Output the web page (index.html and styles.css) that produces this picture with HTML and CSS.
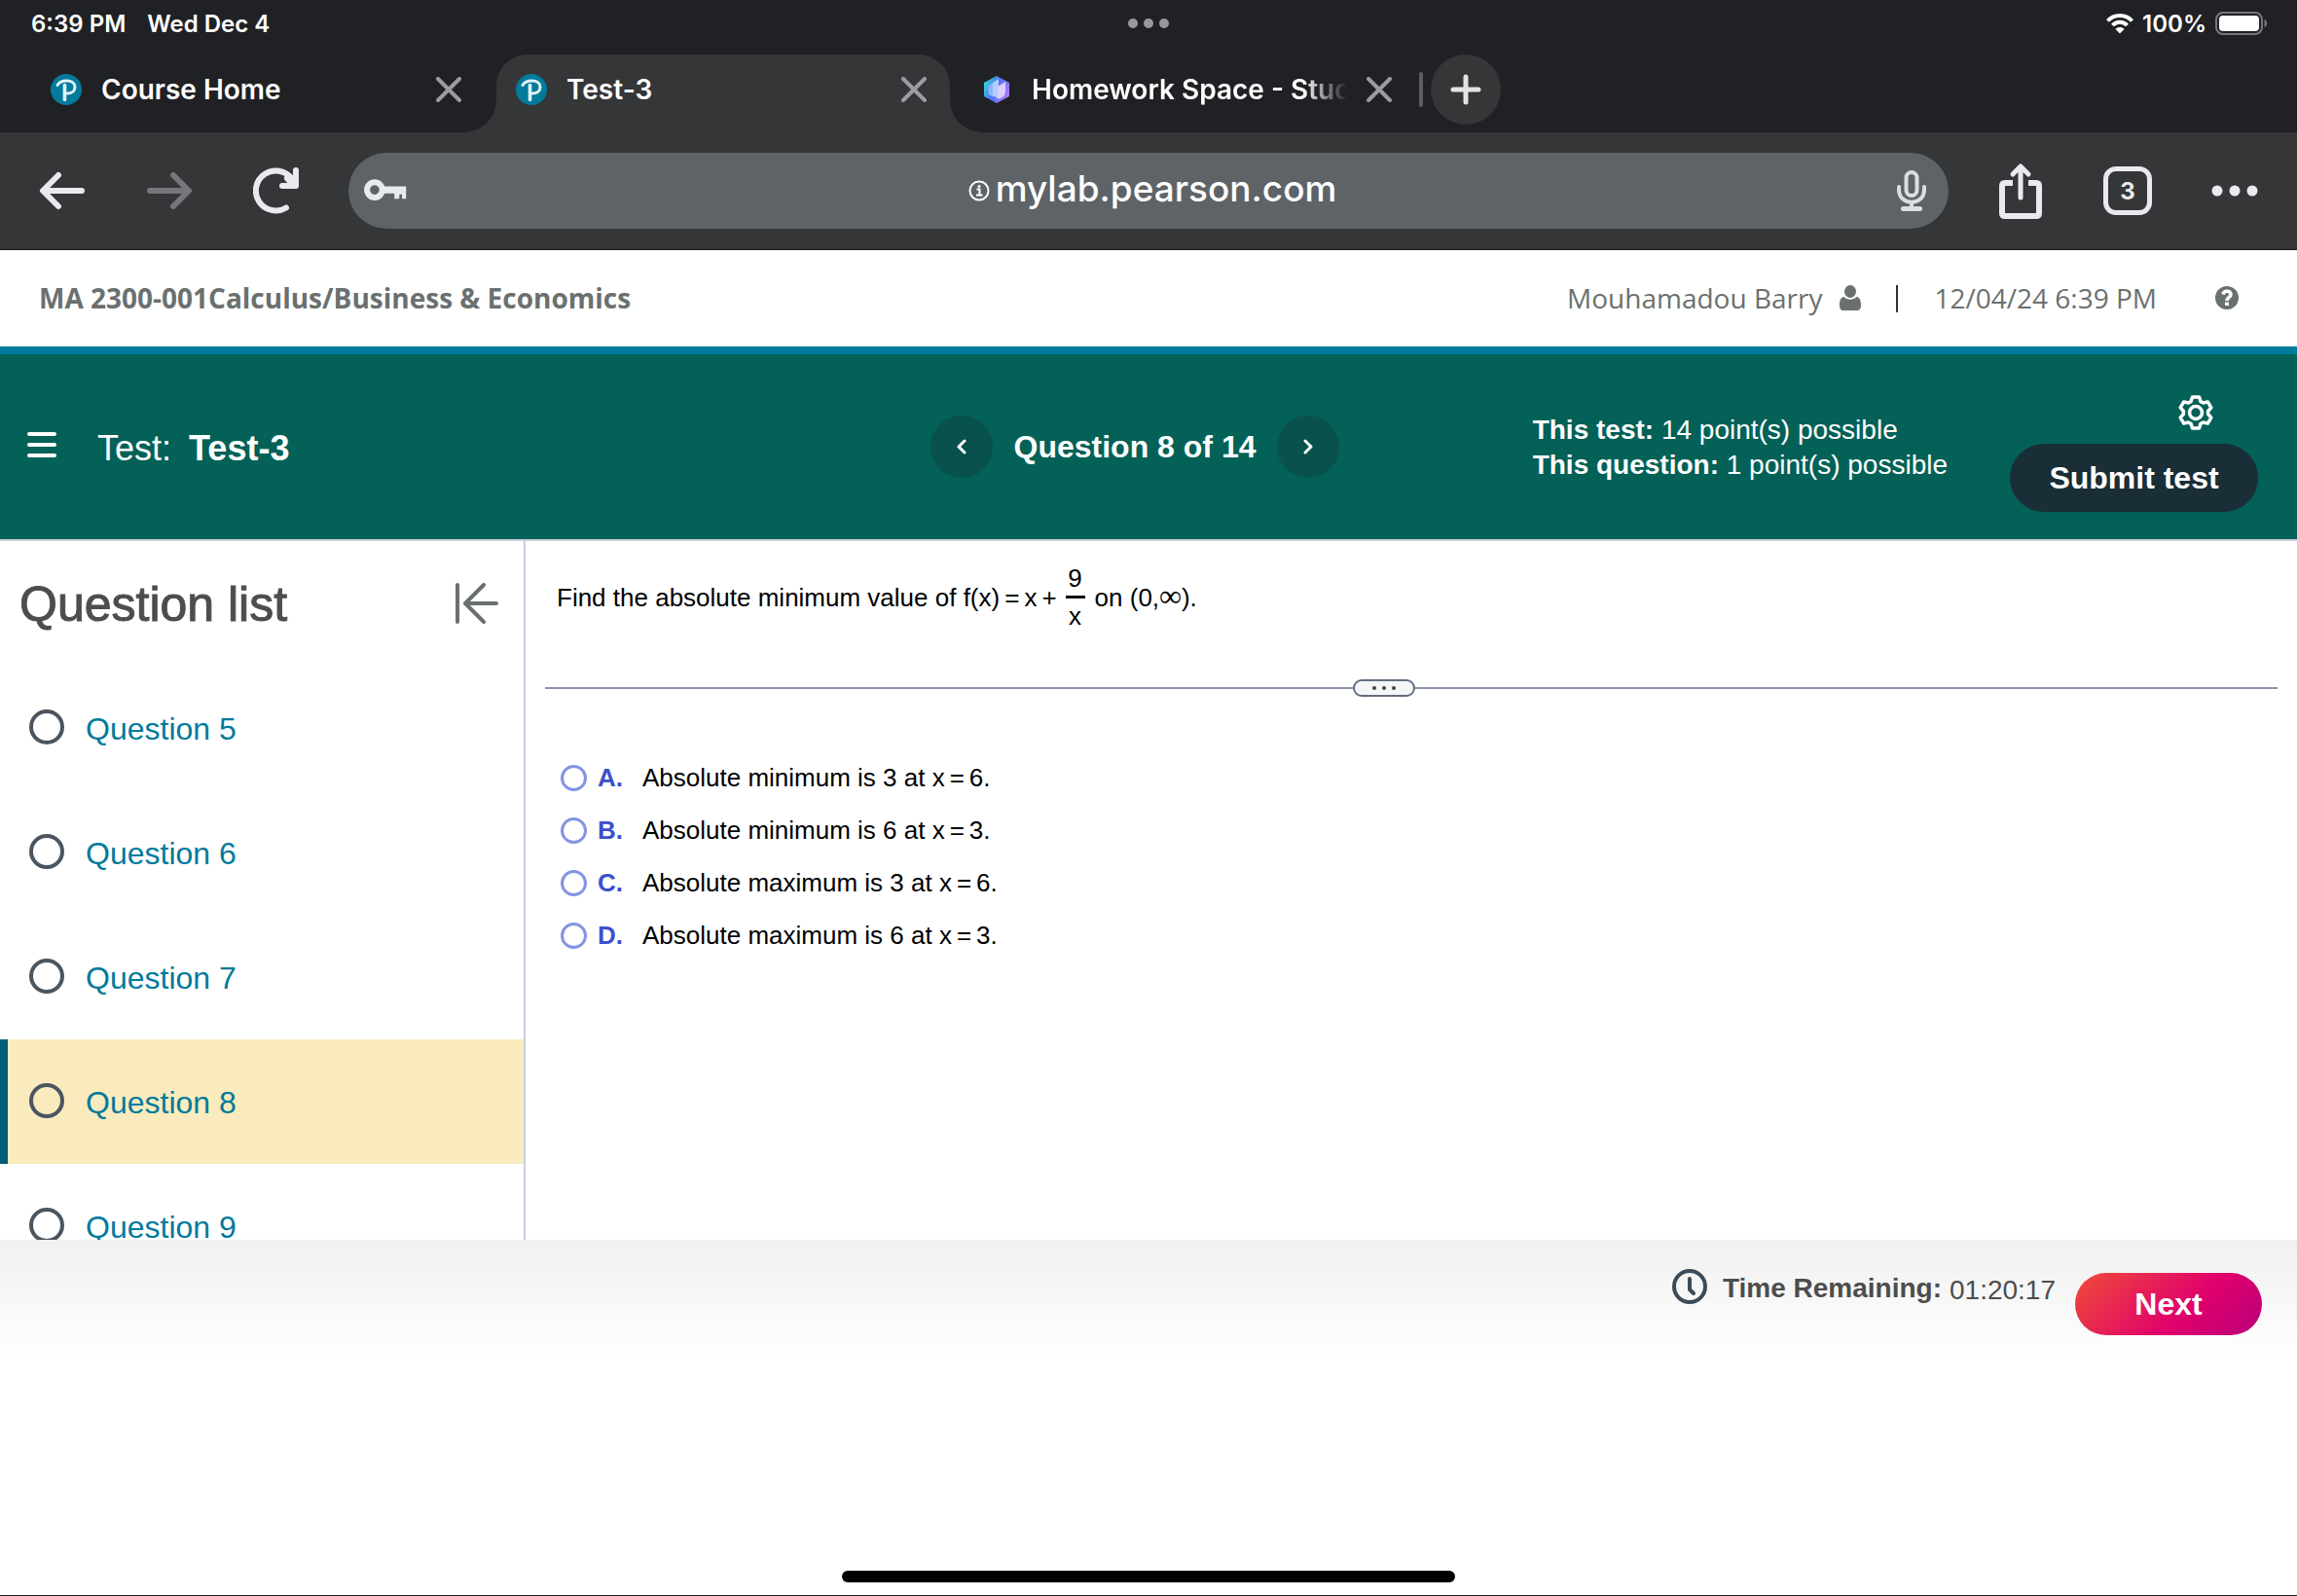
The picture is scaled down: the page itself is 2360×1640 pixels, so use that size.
FILE: index.html
```html
<!DOCTYPE html>
<html lang="en">
<head>
<meta charset="utf-8">
<title>Test-3</title>
<meta name="viewport" content="width=device-width, initial-scale=1">
<link rel="stylesheet" href="styles.css">
</head>
<body>
<svg width="0" height="0" class="defs" aria-hidden="true">
  <defs>
    <linearGradient id="gem" x1="0" y1="0.2" x2="1" y2="0.7">
      <stop offset="0" stop-color="#2fe0d0"/><stop offset="0.45" stop-color="#4a74f8"/><stop offset="1" stop-color="#b07cf8"/>
    </linearGradient>
    <symbol id="pearson" viewBox="0 0 32 32">
      <circle cx="16" cy="16" r="16" fill="#047a9c"/>
      <path d="M7 11.500C9 8 12 7 16.500 7c5 0 8.500 2.500 8.500 6.500s-3.500 6.500-8 6.500" fill="none" stroke="#dff3f8" stroke-width="3" stroke-linecap="round"/>
      <path d="M14.500 11.500v15" stroke="#dff3f8" stroke-width="3.600" stroke-linecap="round"/>
    </symbol>
    <symbol id="cross" viewBox="0 0 26 26">
      <path d="M2 2l22 22M24 2L2 24" stroke="#9b9ba1" stroke-width="4" stroke-linecap="round"/>
    </symbol>
  </defs>
</svg>

<header class="browser">
  <div class="status">
    <span class="clock">6:39 PM</span>
    <span class="date">Wed Dec 4</span>
    <span class="grab"><i></i><i></i><i></i></span>
    <span class="power">
      <svg width="28" height="22" viewBox="0 0 28 22" fill="none" stroke="#fff" stroke-width="4"><path d="M1.500 8.500C8 1 20 1 26.500 8.500M6.500 13c4-4.500 11-4.500 15 0"/><path d="M14 21.500l-4.500-4.500c2.500-2.600 6.500-2.600 9 0z" fill="#fff" stroke="none"/></svg>
      <span>100%</span>
      <svg width="54" height="24" viewBox="0 0 54 24"><rect x="1" y="1" width="47" height="22" rx="7" fill="none" stroke="#77777b" stroke-width="2"/><rect x="4" y="4" width="41" height="16" rx="4" fill="#fff"/><path d="M50.500 8c3.500 1 3.500 7 0 8z" fill="#77777b"/></svg>
    </span>
  </div>

  <nav class="tabs" aria-label="Open tabs">
    <div class="tab tab-first">
      <svg class="favicon"><use href="#pearson"/></svg>
      <span class="tab-title">Course Home</span>
      <button class="bare" aria-label="Close tab"><svg width="26" height="26"><use href="#cross"/></svg></button>
    </div>
    <div class="tab tab-active">
      <svg class="favicon"><use href="#pearson"/></svg>
      <span class="tab-title">Test-3</span>
      <button class="bare" aria-label="Close tab"><svg width="26" height="26"><use href="#cross"/></svg></button>
    </div>
    <div class="tab tab-last">
      <svg class="favicon" viewBox="0 0 32 32"><path d="M16 2l13 7v14l-13 7-13-7V9z" fill="url(#gem)"/><path d="M7.500 12l5.500-3v15l-5.500-3z" fill="#8fb4ff"/><path d="M12 9l6-4v20.500L12 22z" fill="#b4ccff"/><path d="M17 13l8-5v9c0 5-3 8-8 8.500z" fill="#dccfff"/></svg>
      <span class="tab-title tab-fade">Homework Space - Study</span>
      <button class="bare" aria-label="Close tab"><svg width="26" height="26"><use href="#cross"/></svg></button>
    </div>
    <span class="tab-rule"></span>
    <button class="new-tab" aria-label="New tab"><svg width="32" height="32" viewBox="0 0 32 32"><path d="M16 3v26M3 16h26" stroke="#e3e3e6" stroke-width="5" stroke-linecap="round"/></svg></button>
  </nav>

  <div class="toolbar">
    <button class="bare" aria-label="Back"><svg width="48" height="40" viewBox="0 0 48 40" fill="none" stroke="#e9eaee" stroke-width="6" stroke-linecap="round" stroke-linejoin="round"><path d="M44 20H5M20 4L4 20l16 16"/></svg></button>
    <button class="bare" aria-label="Forward"><svg width="48" height="40" viewBox="0 0 48 40" fill="none" stroke="#76777a" stroke-width="6" stroke-linecap="round" stroke-linejoin="round"><path d="M4 20h39M28 4l16 16-16 16"/></svg></button>
    <button class="bare" aria-label="Reload"><svg width="48" height="50" viewBox="0 0 48 50" fill="none" stroke="#e9eaee" stroke-width="6" stroke-linecap="round" stroke-linejoin="round"><path d="M34 42.500A20.500 20.500 0 1 1 40 13M44 4v16H30"/><path d="M36 12l6 6" stroke-width="8"/></svg></button>
    <div class="address">
      <svg width="46" height="24" viewBox="0 0 48 26"><circle cx="12" cy="12" r="8.500" fill="none" stroke="#e9eaee" stroke-width="6.500"/><path d="M22 8h25v14h-4.500v-5h-3v5H34v-6H22z" fill="#e9eaee"/></svg>
      <button class="bare url"><svg width="22" height="22" viewBox="0 0 22 22" fill="none" stroke="#fff"><circle cx="11" cy="11" r="9.500" stroke-width="2"/><path d="M8.500 9.500h3v6M8 15.500h6.500" stroke-width="2"/><circle cx="11" cy="6.500" r="1.500" fill="#fff" stroke="none"/></svg><span>mylab.pearson.com</span></button>
      <button class="bare" aria-label="Voice search"><svg width="30" height="42" viewBox="0 0 30 42" fill="none" stroke="#dcdee1" stroke-width="4" stroke-linecap="round"><rect x="9.500" y="2" width="11" height="24" rx="5.500"/><path d="M2 17v3c0 17 26 17 26 0v-3M15 34v5"/><path d="M6.500 39.500h17" stroke-width="5"/></svg></button>
    </div>
    <button class="bare" aria-label="Share"><svg width="46" height="58" viewBox="0 0 46 58" fill="none" stroke="#e9eaee" stroke-width="6" stroke-linecap="round" stroke-linejoin="round"><path d="M15 21H7q-3 0-3 3v28q0 3 3 3h32q3 0 3-3V24q0-3-3-3h-8" stroke-linecap="butt"/><path d="M23 36V5M15 12l8-8 8 8" stroke-width="5"/></svg></button>
    <button class="tab-count" aria-label="Show 3 tabs">3</button>
    <button class="bare" aria-label="Menu"><svg width="48" height="12" viewBox="0 0 48 12" fill="#e9eaee"><circle cx="6" cy="6" r="5.500"/><circle cx="24" cy="6" r="5.500"/><circle cx="42" cy="6" r="5.500"/></svg></button>
  </div>
</header>

<div class="course">
  <h1 class="course-name">MA 2300-001Calculus/Business &amp; Economics</h1>
  <span>Mouhamadou Barry</span>
  <svg class="person" width="22" height="26" viewBox="0 0 22 26" fill="#6a7070"><ellipse cx="11" cy="6.500" rx="6" ry="6.500"/><path d="M4.500 12c3.500 3.500 9.500 3.500 13 0 3.500.6 4.500 4 4.500 8.500 0 4-1.500 5.500-4 5.500H4c-2.500 0-4-1.500-4-5.500C0 16 1 12.600 4.500 12z"/></svg>
  <span class="course-rule"></span>
  <span>12/04/24 6:39 PM</span>
  <button class="bare help" aria-label="Help"><svg width="24" height="24" viewBox="0 0 24 24"><circle cx="12" cy="12" r="12" fill="#6a7070"/><path d="M8 8.500c1-4.500 8-4 8 0 0 3-4 2.800-4 6.500" fill="none" stroke="#fff" stroke-width="3.600"/><path d="M10 16.500h4v3.500h-4z" fill="#fff"/></svg></button>
</div>

<div class="testbar">
  <div class="test-title">
    <button class="bare menu" aria-label="Menu"><svg width="30" height="28" viewBox="0 0 30 28" stroke="#fff" stroke-width="4" stroke-linecap="round"><path d="M2 3h26M2 14h26M2 25h26"/></svg></button>
    <h2><span>Test:</span> <b>Test-3</b></h2>
  </div>
  <div class="pager">
    <button class="round" aria-label="Previous question"><svg width="12" height="16" viewBox="0 0 12 16" fill="none" stroke="#fff" stroke-width="3" stroke-linecap="round" stroke-linejoin="round"><path d="M9 2L3 8l6 6"/></svg></button>
    <strong>Question 8 of 14</strong>
    <button class="round" aria-label="Next question"><svg width="12" height="16" viewBox="0 0 12 16" fill="none" stroke="#fff" stroke-width="3" stroke-linecap="round" stroke-linejoin="round"><path d="M3 2l6 6-6 6"/></svg></button>
  </div>
  <div class="test-end">
    <p class="points"><b>This test:</b> 14 point(s) possible<br><b>This question:</b> 1 point(s) possible</p>
    <div class="submit-group">
      <button class="bare gear" aria-label="Settings"><svg width="36" height="36" viewBox="0 0 36 36" fill="none" stroke="#fff" stroke-width="3.500" stroke-linejoin="round"><path d="M14.500 2h7l1.500 4.600 2.600 1.400 4.700-1.100 3.500 6-3.200 3.600v3l3.200 3.600-3.500 6-4.700-1.100-2.600 1.400-1.500 4.600h-7L13 29.400 10.400 28l-4.700 1.100-3.500-6 3.200-3.600v-3l-3.200-3.600 3.500-6L10.400 8 13 6.600z"/><circle cx="18" cy="18" r="6.500"/></svg></button>
      <button class="submit">Submit test</button>
    </div>
  </div>
</div>

<main class="work">
  <aside class="sidebar">
    <div class="sidebar-head">
      <h2>Question list</h2>
      <button class="bare" aria-label="Collapse question list"><svg width="46" height="42" viewBox="0 0 46 42" fill="none" stroke="#6a7070" stroke-width="4" stroke-linecap="round" stroke-linejoin="round"><path d="M3 2v38M43 21H11M30 2L11 21l19 19"/></svg></button>
    </div>
    <ul class="questions">
      <li><span class="ring"></span><a href="#q5">Question 5</a></li>
      <li><span class="ring"></span><a href="#q6">Question 6</a></li>
      <li><span class="ring"></span><a href="#q7">Question 7</a></li>
      <li class="current"><span class="ring"></span><a href="#q8">Question 8</a></li>
      <li><span class="ring"></span><a href="#q9">Question 9</a></li>
    </ul>
  </aside>
  <section class="exercise">
    <p class="prompt"><span>Find the absolute minimum value of f(x)</span><span class="eq">=</span><span>x</span><span class="eq">+</span><span class="fraction"><span>9</span><span class="denominator">x</span></span><span>on (0,<span class="infinity">∞</span>).</span></p>
    <div class="splitter"><button class="handle" aria-label="Resize"><i></i><i></i><i></i></button></div>
    <form class="choices">
      <label><input type="radio" name="answer"><b>A.</b><span>Absolute minimum is 3 at x<span class="eq">=</span>6.</span></label>
      <label><input type="radio" name="answer"><b>B.</b><span>Absolute minimum is 6 at x<span class="eq">=</span>3.</span></label>
      <label><input type="radio" name="answer"><b>C.</b><span>Absolute maximum is 3 at x<span class="eq">=</span>6.</span></label>
      <label><input type="radio" name="answer"><b>D.</b><span>Absolute maximum is 6 at x<span class="eq">=</span>3.</span></label>
    </form>
  </section>
</main>

<footer class="footer">
  <div class="timer">
    <svg width="36" height="36" viewBox="0 0 36 36" fill="none" stroke="#3b4b5a" stroke-width="4" stroke-linecap="round" stroke-linejoin="round"><circle cx="18" cy="18" r="16"/><path d="M18 10v11l4 4"/></svg>
    <b>Time Remaining:</b><span>01:20:17</span>
  </div>
  <button class="next">Next</button>
</footer>
<div class="home-indicator"></div>
</body>
</html>
```
FILE: styles.css
```css
* { box-sizing: border-box; }
body {
  margin: 0;
  height: 100vh;
  display: flex;
  flex-direction: column;
  background: #fff;
  border-bottom: 1px solid #222;
  font-family: "Liberation Sans", Arial, sans-serif;
  color: #000;
}
h1, h2, p, ul { margin: 0; padding: 0; }
button { font-family: inherit; cursor: pointer; }
svg { display: block; flex: none; }
.defs { position: absolute; }
.bare { flex: none; display: block; margin: 0; padding: 0; border: 0; background: none; color: inherit; }

/* browser chrome */
.browser { flex: none; background: #202124; color: #fff; font-family: Inter, sans-serif; }
.status {
  position: relative;
  display: flex;
  align-items: center;
  height: 48px;
  padding: 0 30px 0 32px;
  font-size: 24px;
  font-weight: 600;
}
.date { margin-left: 22px; }
.grab { position: absolute; left: 0; right: 0; display: flex; justify-content: center; gap: 6px; }
.grab i { width: 10px; height: 10px; border-radius: 50%; background: #98989c; }
.power { display: flex; align-items: center; gap: 9px; margin-left: auto; }

.tabs { display: flex; height: 88px; padding: 8px 0 0 20px; }
.tab {
  position: relative;
  width: 466px;
  margin-right: 12px;
  padding: 0 24px 8px 20px;
  display: flex;
  align-items: center;
  font-size: 28px;
  font-weight: 600;
}
.favicon { width: 32px; height: 32px; margin-right: 20px; }
.tab-title { flex: 1; min-width: 0; margin-right: 20px; overflow: hidden; white-space: nowrap; }
.tab-fade { -webkit-mask-image: linear-gradient(to right, #000 86%, transparent); mask-image: linear-gradient(to right, #000 86%, transparent); }
.tab-first { padding-left: 32px; padding-right: 12px; }
.tab-active { background: #353638; border-radius: 32px 32px 0 0; margin-left: 12px; }
.tab-last { margin-right: 0; }
.tab-active::before, .tab-active::after { content: ""; position: absolute; bottom: 0; width: 32px; height: 32px; }
.tab-active::before { left: -32px; background: radial-gradient(circle at 0 0, transparent 31px, #353638 32px); }
.tab-active::after { right: -32px; background: radial-gradient(circle at 100% 0, transparent 31px, #353638 32px); }
.tab-rule { width: 4px; height: 36px; margin: 18px 8px 0 4px; border-radius: 2px; background: #5c5d60; }
.new-tab { display: flex; align-items: center; justify-content: center; width: 72px; height: 72px; border: 0; border-radius: 50%; background: #353638; }

.toolbar { display: flex; align-items: center; height: 121px; padding: 0 40px; background: #353638; border-bottom: 1px solid #161616; }
.toolbar > .bare { margin-right: 62px; }
.toolbar > .bare:nth-child(3) { margin-right: 50px; }
.address { flex: 1; display: flex; align-items: center; justify-content: space-between; height: 78px; margin-right: 51px; padding: 0 23px 0 15px; border-radius: 39px; background: #5e6367; }
.url { display: flex; align-items: center; gap: 6px; font-size: 37px; line-height: 42px; font-weight: 500; }
.url span { padding-bottom: 4px; }
.tab-count { width: 50px; height: 50px; margin-right: 61px; padding: 0; border: 5px solid #e9eaee; border-radius: 13px; background: none; color: #e9eaee; font-size: 24px; font-weight: 700; }
.toolbar > .bare:last-child { margin-right: 0; }

/* course strip */
.course {
  flex: none;
  display: flex;
  align-items: center;
  height: 107px;
  padding: 0 60px 2px 40px;
  border-bottom: 8px solid #007a9c;
  font-family: "Open Sans", sans-serif;
  font-size: 28px;
  color: #6a7070;
}
.course-name { margin-right: auto; font-size: 28px; font-weight: 700; }
.person { margin-left: 18px; }
.course-rule { width: 2px; height: 28px; margin: 2px 37px 0 36px; background: #333; }
.help { margin-left: 60px; }

/* test bar */
.testbar {
  flex: none;
  display: flex;
  align-items: flex-start;
  height: 192px;
  padding: 0 40px 0 28px;
  background: #036157;
  border-bottom: 2px solid #c9d0dc;
  color: #fff;
}
.test-title { flex: 1; display: flex; align-items: center; gap: 42px; padding-top: 73px; }
.test-title h2 { font-size: 36px; line-height: 48px; font-weight: 400; }
.test-title b { margin-left: 8px; }
.menu { padding-bottom: 8px; }
.pager { display: flex; align-items: center; gap: 22px; margin-right: 16px; padding-top: 63px; font-size: 32px; }
.round { display: flex; align-items: center; justify-content: center; width: 64px; height: 64px; padding: 0; border: 0; border-radius: 50%; background: #08514c; }
.test-end { flex: 1; display: flex; justify-content: flex-end; gap: 64px; }
.points { padding-top: 60px; font-size: 28px; line-height: 36px; }
.submit-group { display: flex; flex-direction: column; padding-top: 42px; gap: 14px; }
.gear { align-self: flex-end; margin-right: 46px; }
.submit { width: 255px; height: 70px; padding: 0; border: 0; border-radius: 35px; background: #1a2e37; color: #fff; font-size: 32px; font-weight: 700; }

/* work area */
.work { flex: 1; min-height: 0; display: flex; }
.sidebar { width: 540px; flex: none; border-right: 2px solid #c9cfde; overflow: hidden; }
.sidebar-head { display: flex; align-items: center; justify-content: space-between; height: 128px; padding: 0 25px 0 20px; }
.sidebar-head h2 { padding-top: 2px; font-size: 50px; font-weight: 400; color: #4d4d4d; -webkit-text-stroke: 1px #4d4d4d; }
.questions { list-style: none; }
.questions li { display: flex; align-items: center; gap: 22px; height: 128px; padding-left: 22px; border-left: 8px solid transparent; font-size: 32px; }
.questions .current { background: #f9ebbd; border-left-color: #005d78; }
.questions a { padding-top: 2px; color: #007a9c; text-decoration: none; }
.ring { width: 36px; height: 36px; margin-bottom: 2px; border: 4px solid #4a5560; border-radius: 50%; }

.exercise { flex: 1; min-width: 0; padding: 18px 20px 0; font-size: 26px; line-height: 36px; }
.prompt { display: flex; align-items: center; height: 80px; padding-left: 12px; white-space: pre; }
.eq { margin: 0 5px; }
.infinity { font-family: "Liberation Serif", serif; font-size: 32px; line-height: 32px; }
.fraction { display: flex; flex-direction: column; align-items: center; width: 20px; margin: 0 10px 2px 4px; }
.denominator { width: 20px; border-top: 3px solid #000; text-align: center; }
.splitter { display: flex; align-items: center; justify-content: center; height: 20px; margin-top: 43px; padding-right: 56px; background: linear-gradient(#8a94a8, #8a94a8) center / 100% 2px no-repeat; }
.handle { display: flex; align-items: center; justify-content: center; gap: 6px; width: 64px; height: 18px; padding: 0; border: 2px solid #636e80; border-radius: 9px; background: #f4f7fa; }
.handle i { width: 4px; height: 4px; border-radius: 50%; background: #444; }
.choices { padding: 55px 0 0 16px; }
.choices label { display: flex; align-items: center; height: 54px; }
.choices input { appearance: none; width: 27px; height: 27px; margin: 0 11px 0 0; border: 3px solid #8494e2; border-radius: 50%; background: #fff; }
.choices b { width: 46px; color: #3b50cc; }

/* footer */
.footer { flex: none; display: flex; align-items: flex-start; justify-content: flex-end; gap: 20px; height: 365px; padding: 34px 36px 0; background: linear-gradient(#f0f0f0, #fff 124px); }
.timer { display: flex; align-items: center; height: 36px; margin-top: -4px; font-size: 28px; color: #4d4d4d; }
.timer b { margin: 0 8px 0 16px; padding-top: 4px; }
.timer span { padding-top: 8px; }
.next { width: 192px; height: 64px; padding: 0; border: 0; border-radius: 32px; background: linear-gradient(135deg, #ef4b37, #e0006c 60%, #b9007a); color: #fff; font-size: 32px; font-weight: 700; }
.home-indicator { position: absolute; left: 50%; bottom: 14px; width: 630px; height: 12px; margin-left: -315px; border-radius: 6px; background: #000; }
```
